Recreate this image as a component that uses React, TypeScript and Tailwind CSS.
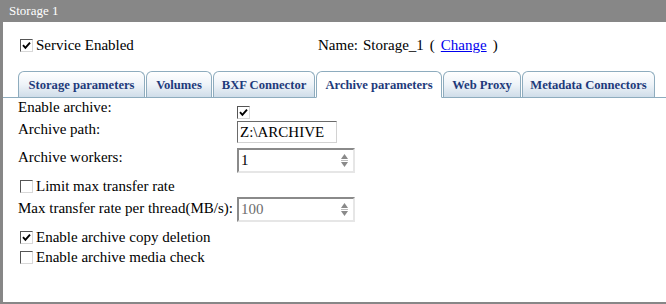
import React from 'react'

function Check({ checked }: { checked?: boolean }) {
  return (
    <span className="inline-flex items-center justify-center w-[13px] h-[13px] bg-white border border-t-[#555] border-l-[#555] border-b-[#d8d8d8] border-r-[#d8d8d8] shrink-0">
      {checked && (
        <svg width="9" height="9" viewBox="0 0 9 9">
          <path d="M1 4.2 L3.4 6.8 L8 1.6" fill="none" stroke="#000" strokeWidth="1.9" />
        </svg>
      )}
    </span>
  )
}

function Spinner({ value, disabled }: { value: string; disabled?: boolean }) {
  return (
    <div className="flex items-center w-[118px] h-[25px] bg-white border-2 border-t-[#8a8a8a] border-l-[#8a8a8a] border-b-[#e6e6e6] border-r-[#e6e6e6]">
      <span className={`flex-1 pl-[2px] text-[15px] leading-none ${disabled ? 'text-[#6d6d6d]' : 'text-black'}`}>{value}</span>
      <svg width="9" height="15" viewBox="0 0 9 15" className="mr-[4px]">
        <path d="M4.5 1 L8 6 L1 6 Z" fill="#8a8a8a" />
        <line x1="1" y1="7.5" x2="8" y2="7.5" stroke="#bcbcbc" strokeWidth="1" />
        <path d="M4.5 14 L8 9 L1 9 Z" fill="#8a8a8a" />
      </svg>
    </div>
  )
}

const tabs = [
  { name: 'Storage parameters', w: 'w-[127px]' },
  { name: 'Volumes', w: 'w-[66px]' },
  { name: 'BXF Connector', w: 'w-[102px]' },
  { name: 'Archive parameters', w: 'w-[126px]', active: true },
  { name: 'Web Proxy', w: 'w-[78px]' },
  { name: 'Metadata Connectors', w: 'w-[133px]' },
]

export default function App() {
  return (
    <div className="w-[666px] h-[304px] bg-[#878787] flex flex-col font-['Liberation_Serif','DejaVu_Serif',serif]">
      <div className="h-[22px] shrink-0 pl-[9px] pt-[3px] text-white text-[13px] leading-[16px]">Storage 1</div>
      <div className="flex-1 ml-[3px] mb-[2px] bg-white text-black text-[15px] leading-[18px]">
        {/* service row */}
        <div className="flex items-center h-[20px] mt-[13px]">
          <div className="flex items-center gap-[3px] pl-[17px] w-[315px]">
            <Check checked />
            <span>Service Enabled</span>
          </div>
          <div className="flex items-center">
            <span>Name:</span>
            <span className="ml-[5px]">Storage_1</span>
            <span className="ml-[6px]">(</span>
            <a className="ml-[6px] text-[#0000ee] underline">Change</a>
            <span className="ml-[6px]">)</span>
          </div>
        </div>

        {/* tabs */}
        <div className="flex items-end h-[27px] mt-[16px] pl-[15px] border-b border-[#8eacbe]">
          {tabs.map((t) => (
            <div
              key={t.name}
              className={`${t.w} h-[26px] mr-[1px] flex items-center justify-center rounded-t-[6px] border border-[#8eacbe] text-[12.6px] font-bold text-[#1e3a7b] ${
                t.active ? 'bg-white border-b-white -mb-px h-[27px]' : 'bg-gradient-to-b from-white via-[#eef3f8] to-[#cfdde9] border-b-0'
              }`}
            >
              {t.name}
            </div>
          ))}
        </div>

        {/* form */}
        <div className="pl-[15px] flex flex-col">
          <div className="flex items-start h-[22px]">
            <span className="w-[219px]">Enable archive:</span>
            <span className="mt-[5px]"><Check checked /></span>
          </div>
          <div className="flex items-start h-[28px]">
            <span className="w-[219px]">Archive path:</span>
            <div className="flex items-center w-[100px] h-[22px] mt-[1px] border border-t-[#6a6a6a] border-l-[#6a6a6a] border-b-[#d2d2d2] border-r-[#d2d2d2] pl-[2px] text-[15px]">
              Z:\ARCHIVE
            </div>
          </div>
          <div className="flex items-start h-[28px]">
            <span className="w-[219px]">Archive workers:</span>
            <Spinner value="1" />
          </div>
          <div className="flex items-center h-[20px] pl-[2px] gap-[3px]">
            <Check />
            <span>Limit max transfer rate</span>
          </div>
          <div className="flex items-start h-[29px] mt-[1px]">
            <span className="w-[219px] pt-[2px]">Max transfer rate per thread(MB/s):</span>
            <Spinner value="100" disabled />
          </div>
          <div className="flex items-center h-[20px] pl-[2px] gap-[3px] mt-[1px]">
            <Check checked />
            <span>Enable archive copy deletion</span>
          </div>
          <div className="flex items-center h-[20px] pl-[2px] gap-[3px]">
            <Check />
            <span>Enable archive media check</span>
          </div>
        </div>
      </div>
    </div>
  )
}
